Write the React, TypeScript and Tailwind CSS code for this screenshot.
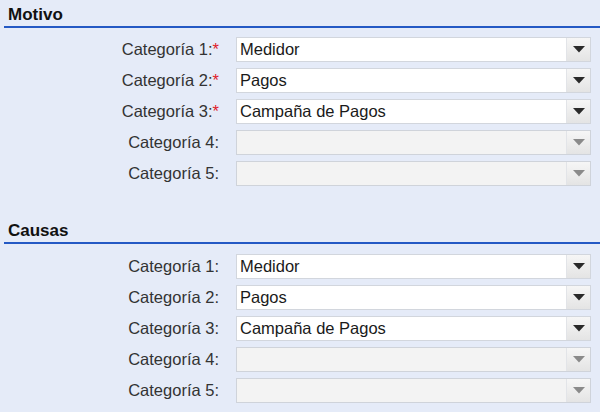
import React from "react";

type Row = { label: string; value?: string; required?: boolean; disabled?: boolean };

const Caret = ({ disabled }: { disabled?: boolean }) => (
  <svg width="12" height="7" viewBox="0 0 12 7">
    <polygon points="0,0 12,0 6,6.5" fill={disabled ? "#8a8a8a" : "#2a2a2a"} />
  </svg>
);

const Select = ({ value, disabled }: { value?: string; disabled?: boolean }) => (
  <div
    className={`flex h-[25px] w-[355px] border ${
      disabled ? "border-[#cfd3da] bg-[#f3f3f3]" : "border-[#d2d6dd] bg-white"
    }`}
  >
    <div className="flex flex-1 items-center pl-[3px] text-[16.5px] leading-none text-[#1a1a1a]">
      {value}
    </div>
    <div className="flex w-[24px] items-center justify-center border-l border-[#e2e4e8] bg-gradient-to-b from-[#f6f6f6] to-[#e4e4e4]">
      <Caret disabled={disabled} />
    </div>
  </div>
);

const Section = ({ title, rows, gapTop }: { title: string; rows: Row[]; gapTop: string }) => (
  <div>
    <div className="ml-[4px] flex h-[28px] items-end border-b-2 border-[#2459c4] pb-[3px] pl-[4px] text-[17px] font-bold leading-none text-[#111]">
      {title}
    </div>
    <div className={`flex flex-col gap-[6px] ${gapTop}`}>
      {rows.map((r) => (
        <div key={r.label} className="flex items-center">
          <div className="w-[220px] pr-[1px] text-right text-[16.5px] leading-none text-[#333]">
            {r.label}
            {r.required && <span className="text-[#e0202a]">*</span>}
          </div>
          <div className="ml-[16px]">
            <Select value={r.value} disabled={r.disabled} />
          </div>
        </div>
      ))}
    </div>
  </div>
);

export default function App() {
  const motivo: Row[] = [
    { label: "Categoría 1:", value: "Medidor", required: true },
    { label: "Categoría 2:", value: "Pagos", required: true },
    { label: "Categoría 3:", value: "Campaña de Pagos", required: true },
    { label: "Categoría 4:", disabled: true },
    { label: "Categoría 5:", disabled: true },
  ];
  const causas: Row[] = [
    { label: "Categoría 1:", value: "Medidor" },
    { label: "Categoría 2:", value: "Pagos" },
    { label: "Categoría 3:", value: "Campaña de Pagos" },
    { label: "Categoría 4:", disabled: true },
    { label: "Categoría 5:", disabled: true },
  ];
  return (
    <div
      className="h-[412px] w-[600px] overflow-hidden bg-[#e5ebf8]"
      style={{ fontFamily: '"Liberation Sans", Arial, sans-serif' }}
    >
      <Section title="Motivo" rows={motivo} gapTop="mt-[9px]" />
      <div className="mt-[30px]">
        <Section title="Causas" rows={causas} gapTop="mt-[10px]" />
      </div>
    </div>
  );
}
